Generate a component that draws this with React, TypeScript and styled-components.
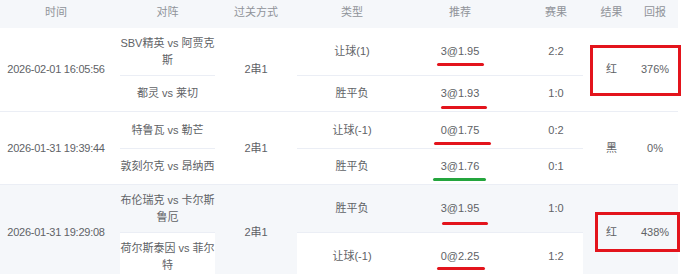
import React from 'react'
import styled, { createGlobalStyle } from 'styled-components'

const COLS = '112px 111px 66px 118px 106px 78px 41px 46px'
const RED = '#e3141c'
const GREEN = '#24a53d'

const GlobalStyle = createGlobalStyle`
  body {
    margin: 0;
    background: #fff;
  }
`

const Table = styled.div`
  width: 678px;
  font-family: 'Liberation Sans', 'Noto Sans CJK SC', sans-serif;
  font-size: 11px;
  line-height: 17px;
  color: #606266;
`

const HeaderRow = styled.div`
  display: grid;
  grid-template-columns: ${COLS};
  height: 28px;
  background: #f5f7fa;
  color: #909399;
`

const HeaderCell = styled.div<{ $left?: number; $right?: number; $padLeft?: number }>`
  display: flex;
  align-items: center;
  justify-content: center;
  padding-bottom: 3px;
  margin-left: ${(p) => p.$left || 0}px;
  margin-right: ${(p) => p.$right || 0}px;
  padding-left: ${(p) => p.$padLeft || 0}px;
`

const Group = styled.div<{ $rows: number; $hover?: boolean }>`
  position: relative;
  display: grid;
  grid-template-columns: ${COLS};
  grid-template-rows: repeat(${(p) => p.$rows}, auto);
  border-bottom: 1px solid #ebeef5;
  background: ${(p) => (p.$hover ? '#f5f7fa' : '#fff')};
`

const SpanCell = styled.div<{ $rows: number; $col: number; $tight?: boolean }>`
  grid-column: ${(p) => p.$col};
  grid-row: 1 / span ${(p) => p.$rows};
  display: flex;
  align-items: center;
  justify-content: center;
  letter-spacing: ${(p) => (p.$tight ? '-0.25px' : 'normal')};
  white-space: nowrap;
`

const InnerCell = styled.div<{
  $col: number
  $row: number
  $hover?: boolean
  $left?: number
  $right?: number
  $padLeft?: number
}>`
  grid-column: ${(p) => p.$col};
  grid-row: ${(p) => p.$row};
  box-sizing: border-box;
  min-height: 36px;
  padding: 6.5px 0 6.5px ${(p) => p.$padLeft || 0}px;
  margin-left: ${(p) => p.$left || 0}px;
  margin-right: ${(p) => p.$right || 0}px;
  display: flex;
  align-items: center;
  justify-content: center;
  text-align: center;
  background: ${(p) => (p.$hover ? '#f5f7fa' : '#fff')};
  border-top: ${(p) => (p.$row > 1 ? '1px solid #ebeef5' : '0')};
`

const Pick = styled.span`
  position: relative;
  display: inline-block;
  white-space: nowrap;
`

const Underline = styled.span<{ $color: string; $dx: number; $dy: number; $w: number }>`
  position: absolute;
  left: ${(p) => p.$dx}px;
  top: ${(p) => p.$dy}px;
  width: ${(p) => p.$w}px;
  height: 3px;
  border-radius: 2px;
  background: ${(p) => p.$color};
`

const MarkBox = styled.div<{ $left: number; $top: number; $w: number; $h: number }>`
  position: absolute;
  left: ${(p) => p.$left}px;
  top: ${(p) => p.$top}px;
  width: ${(p) => p.$w}px;
  height: ${(p) => p.$h}px;
  box-sizing: border-box;
  border: 3px solid ${RED};
  pointer-events: none;
`

type Mark = { color: string; dx: number; dy: number; w: number }
type Row = { match: string; type: string; pick: string; score: string; mark: Mark }
type Box = { left: number; top: number; w: number; h: number }
type Bet = {
  time: string
  pass: string
  result: string
  ret: string
  rows: Row[]
  box?: Box
  hoverRow?: number
}

const bets: Bet[] = [
  {
    time: '2026-02-01 16:05:56',
    pass: '2串1',
    result: '红',
    ret: '376%',
    box: { left: 590, top: 17, w: 91, h: 51 },
    rows: [
      {
        match: 'SBV精英 vs 阿贾克斯',
        type: '让球(1)',
        pick: '3@1.95',
        score: '2:2',
        mark: { color: RED, dx: -4, dy: 20, w: 47 },
      },
      {
        match: '都灵 vs 莱切',
        type: '胜平负',
        pick: '3@1.93',
        score: '1:0',
        mark: { color: RED, dx: 0, dy: 21, w: 46 },
      },
    ],
  },
  {
    time: '2026-01-31 19:39:44',
    pass: '2串1',
    result: '黑',
    ret: '0%',
    rows: [
      {
        match: '特鲁瓦 vs 勒芒',
        type: '让球(-1)',
        pick: '0@1.75',
        score: '0:2',
        mark: { color: RED, dx: -7, dy: 20, w: 57 },
      },
      {
        match: '敦刻尔克 vs 昂纳西',
        type: '胜平负',
        pick: '3@1.76',
        score: '0:1',
        mark: { color: GREEN, dx: -8, dy: 20, w: 53 },
      },
    ],
  },
  {
    time: '2026-01-31 19:29:08',
    pass: '2串1',
    result: '红',
    ret: '438%',
    box: { left: 595, top: 27, w: 85, h: 40 },
    hoverRow: 0,
    rows: [
      {
        match: '布伦瑞克 vs 卡尔斯鲁厄',
        type: '胜平负',
        pick: '3@1.95',
        score: '1:0',
        mark: { color: RED, dx: 1, dy: 22, w: 46 },
      },
      {
        match: '荷尔斯泰因 vs 菲尔特',
        type: '让球(-1)',
        pick: '0@2.25',
        score: '1:2',
        mark: { color: RED, dx: -4, dy: 19, w: 48 },
      },
    ],
  },
]

const BetGroup = ({ bet }: { bet: Bet }) => {
  const n = bet.rows.length
  const hovered = bet.hoverRow !== undefined
  return (
    <Group $rows={n} $hover={hovered}>
      <SpanCell $rows={n} $col={1} $tight>
        {bet.time}
      </SpanCell>
      {bet.rows.map((r, i) => {
        const row = i + 1
        const hl = bet.hoverRow === i
        return (
          <React.Fragment key={i}>
            <InnerCell $col={2} $row={row} $hover={hl} $left={8} $right={8}>
              {r.match}
            </InnerCell>
            <InnerCell $col={4} $row={row} $hover={hl} $left={8}>
              {r.type}
            </InnerCell>
            <InnerCell $col={5} $row={row} $hover={hl}>
              <Pick>
                {r.pick}
                <Underline $color={r.mark.color} $dx={r.mark.dx} $dy={r.mark.dy} $w={r.mark.w} />
              </Pick>
            </InnerCell>
            <InnerCell $col={6} $row={row} $hover={hl} $right={8} $padLeft={16}>
              {r.score}
            </InnerCell>
          </React.Fragment>
        )
      })}
      <SpanCell $rows={n} $col={3}>
        {bet.pass}
      </SpanCell>
      <SpanCell $rows={n} $col={7}>
        {bet.result}
      </SpanCell>
      <SpanCell $rows={n} $col={8}>
        {bet.ret}
      </SpanCell>
      {bet.box && <MarkBox $left={bet.box.left} $top={bet.box.top} $w={bet.box.w} $h={bet.box.h} />}
    </Group>
  )
}

export default function App() {
  return (
    <>
      <GlobalStyle />
      <Table>
        <HeaderRow>
          <HeaderCell>时间</HeaderCell>
          <HeaderCell>对阵</HeaderCell>
          <HeaderCell>过关方式</HeaderCell>
          <HeaderCell $left={8}>类型</HeaderCell>
          <HeaderCell>推荐</HeaderCell>
          <HeaderCell $right={8} $padLeft={16}>
            赛果
          </HeaderCell>
          <HeaderCell>结果</HeaderCell>
          <HeaderCell>回报</HeaderCell>
        </HeaderRow>
        {bets.map((b, i) => (
          <BetGroup key={i} bet={b} />
        ))}
      </Table>
    </>
  )
}
